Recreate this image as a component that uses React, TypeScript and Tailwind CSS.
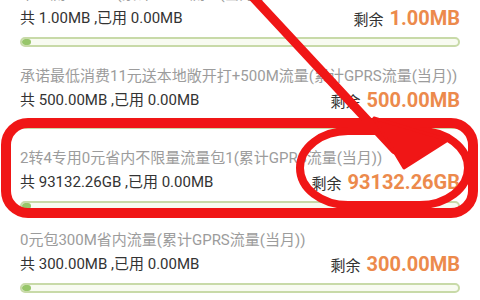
import React from 'react';

type Pkg = { title: string; total: string; used: string; left: string };

const pkgs: Pkg[] = [
  { title: '本地流量包1M(累计GPRS流量(当月))', total: '1.00MB', used: '0.00MB', left: '1.00MB' },
  { title: '承诺最低消费11元送本地敞开打+500M流量(累计GPRS流量(当月))', total: '500.00MB', used: '0.00MB', left: '500.00MB' },
  { title: '2转4专用0元省内不限量流量包1(累计GPRS流量(当月))', total: '93132.26GB', used: '0.00MB', left: '93132.26GB' },
  { title: '0元包300M省内流量(累计GPRS流量(当月))', total: '300.00MB', used: '0.00MB', left: '300.00MB' },
];

function Row({ p }: { p: Pkg }) {
  return (
    <div className="px-[20px] pt-[8px] pb-[9px]">
      <div className="text-[15px] leading-[24px] text-[#9c9c9c] whitespace-nowrap">{p.title}</div>
      <div className="flex items-center justify-between h-[24px]">
        <span className="text-[15px] text-[#333]">
          共 {p.total} ,已用 {p.used}
        </span>
        <span className="flex items-baseline gap-[6px]">
          <span className="text-[15px] text-[#333]">剩余</span>
          <span className="text-[20px] font-bold text-[#ec8a4c]">{p.left}</span>
        </span>
      </div>
      <div className="mt-[7px] h-[10px] rounded-full border-2 border-[#c8daa8] bg-[#f8fbf1] overflow-hidden">
        <div className="h-full w-[9px] rounded-full bg-[#97c66a]" />
      </div>
    </div>
  );
}

export default function App() {
  return (
    <div
      className="relative w-[480px] h-[300px] overflow-hidden bg-white"
      style={{ fontFamily: "Roboto, 'Noto Sans CJK SC', sans-serif" }}
    >
      <div className="mt-[-26px]">
        {pkgs.map((p) => (
          <Row key={p.title} p={p} />
        ))}
      </div>

      {/* red annotation marks */}
      <svg className="absolute inset-0 pointer-events-none" width="480" height="300" viewBox="0 0 480 300">
        <g fill="none" stroke="#f01616" strokeLinecap="round" strokeLinejoin="round">
          <rect x="6" y="123" width="467" height="90" rx="22" strokeWidth="10" />
          <rect x="300" y="131" width="168" height="74" rx="48" ry="37" strokeWidth="8" />
          <line x1="250" y1="-6" x2="395" y2="150" strokeWidth="9" />
        </g>
        <polygon points="404,168 374,118 448,140" fill="#f01616" stroke="#f01616" strokeWidth="3" strokeLinejoin="round" />
      </svg>
    </div>
  );
}
